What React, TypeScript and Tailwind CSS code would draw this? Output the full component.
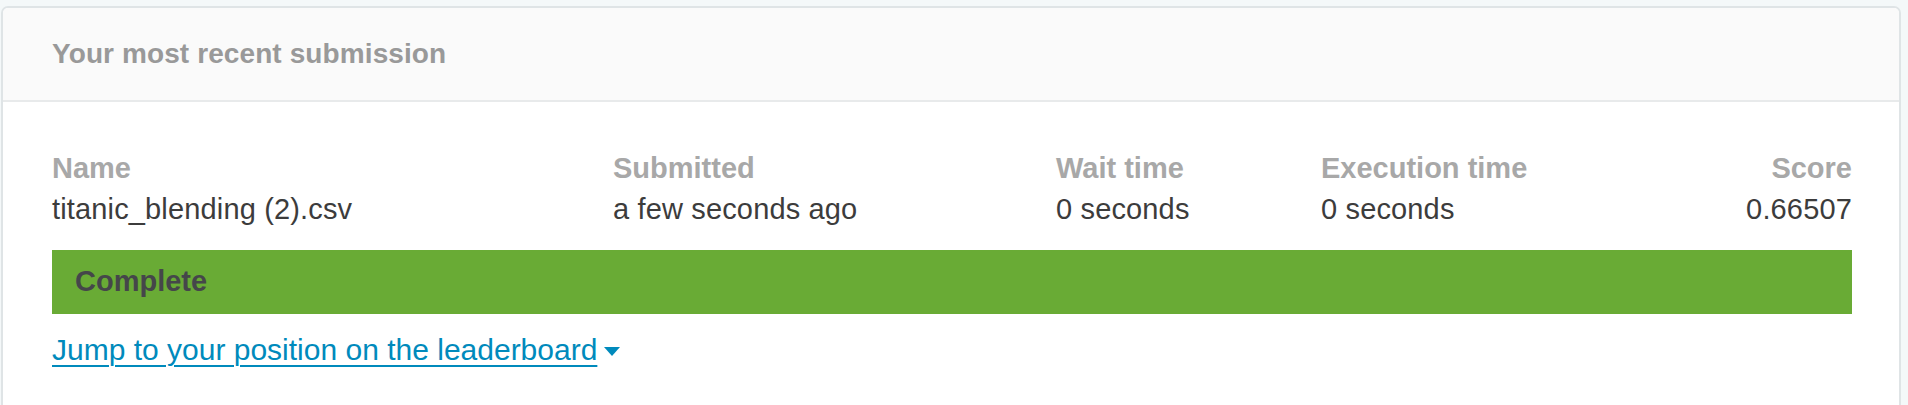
export default function App() {
  const columns = [
    { label: "Name", value: "titanic_blending (2).csv", align: "text-left" },
    { label: "Submitted", value: "a few seconds ago", align: "text-left" },
    { label: "Wait time", value: "0 seconds", align: "text-left" },
    { label: "Execution time", value: "0 seconds", align: "text-left" },
    { label: "Score", value: "0.66507", align: "text-right" },
  ];

  return (
    <div
      className="min-h-screen bg-[#f4f8f9] pt-[6px] pl-[1px] pr-[7px]"
      style={{ fontFamily: '"Liberation Sans", Arial, sans-serif' }}
    >
      <div className="bg-white border-2 border-[#dfe4e6] rounded-[7px] overflow-hidden">
        <div className="h-[94px] bg-[#fafafa] border-b-2 border-[#e8eaeb] flex items-center pl-[49px]">
          <h2 className="text-[28px] font-bold text-[#999999] tracking-[0.1px]">
            Your most recent submission
          </h2>
        </div>
        <div className="pl-[49px] pr-[47px] pt-[46px] pb-[40px]">
          <div className="grid grid-cols-[561px_443px_265px_1fr_auto] leading-[41px] text-[29px]">
            {columns.map((col) => (
              <div key={col.label} className={col.align}>
                <div className="font-bold text-[#a8a8a8]">{col.label}</div>
                <div className="text-[#3c3c3c] tracking-[0.15px]">{col.value}</div>
              </div>
            ))}
          </div>
          <div className="mt-[20px] h-[64px] bg-[#69ab35] flex items-center pl-[23px]">
            <span className="text-[29px] font-bold text-[#45464a]">Complete</span>
          </div>
          <div className="mt-[15px] leading-[41px] text-[30px]">
            <a href="#" className="text-[#008abc] underline underline-offset-[5px] decoration-[2px]">
              Jump to your position on the leaderboard
            </a>
            <svg className="inline-block ml-[7px] align-middle" width="16" height="10" viewBox="0 0 16 10">
              <path d="M0 0 L16 0 L8 9 Z" fill="#008abc" />
            </svg>
          </div>
        </div>
      </div>
    </div>
  );
}
